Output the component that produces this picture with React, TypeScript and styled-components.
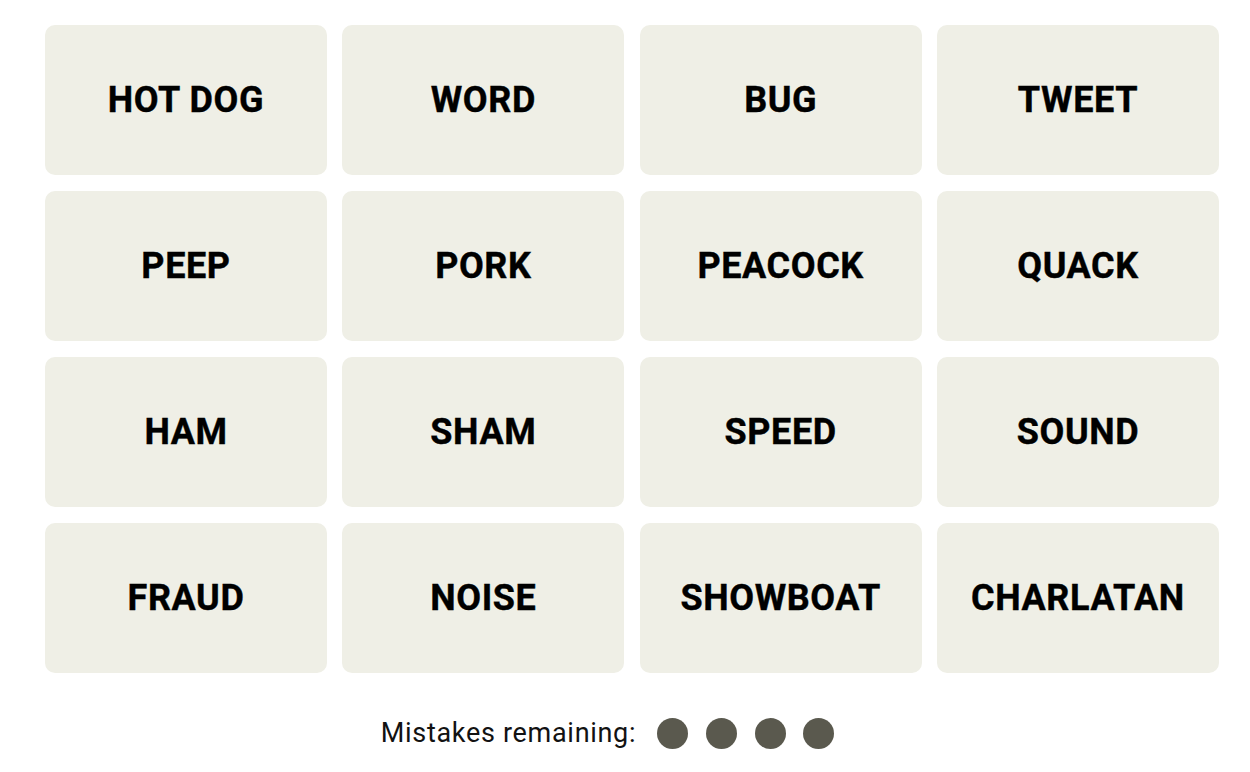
import React from "react";
import styled, { createGlobalStyle } from "styled-components";

const GlobalStyle = createGlobalStyle`
  html, body {
    margin: 0;
    padding: 0;
    background: #ffffff;
  }
  body {
    font-family: Roboto, "Liberation Sans", Arial, sans-serif;
  }
`;

const Page = styled.main`
  width: 1250px;
  height: 772px;
  box-sizing: border-box;
  padding: 25px 31px 0 45px;
  display: flex;
  flex-direction: column;
`;

const Board = styled.div`
  width: 1174px;
  display: grid;
  grid-template-columns: repeat(4, 282px);
  grid-auto-rows: 150px;
  column-gap: 15.33px;
  row-gap: 16px;
`;

const Tile = styled.button`
  border: none;
  margin: 0;
  padding: 0;
  border-radius: 10px;
  background: #efefe6;
  color: #000000;
  font-family: Roboto, "Liberation Sans", Arial, sans-serif;
  font-weight: 700;
  font-size: 36px;
  letter-spacing: 0.6px;
  text-transform: uppercase;
  -webkit-text-stroke: 0.4px #000000;
  display: flex;
  align-items: center;
  justify-content: center;
  cursor: pointer;
`;

const Footer = styled.div`
  margin-top: 44px;
  margin-left: -45px;
  width: 1250px;
  box-sizing: border-box;
  padding-right: 35px;
  display: flex;
  align-items: center;
  justify-content: center;
  gap: 21px;
`;

const Label = styled.span`
  font-family: Roboto, "Liberation Sans", Arial, sans-serif;
  font-size: 27px;
  font-weight: 400;
  letter-spacing: 0.7px;
  color: #121212;
`;

const Dots = styled.div`
  display: flex;
  align-items: center;
  gap: 17.7px;
`;

const Dot = styled.span`
  width: 31px;
  height: 31px;
  border-radius: 50%;
  background: #5a594e;
  display: block;
`;

const words = [
  "HOT DOG", "WORD", "BUG", "TWEET",
  "PEEP", "PORK", "PEACOCK", "QUACK",
  "HAM", "SHAM", "SPEED", "SOUND",
  "FRAUD", "NOISE", "SHOWBOAT", "CHARLATAN",
];

export default function App() {
  return (
    <>
      <GlobalStyle />
      <Page>
        <Board>
          {words.map((w) => (
            <Tile key={w}>{w}</Tile>
          ))}
        </Board>
        <Footer>
          <Label>Mistakes remaining:</Label>
          <Dots>
            <Dot />
            <Dot />
            <Dot />
            <Dot />
          </Dots>
        </Footer>
      </Page>
    </>
  );
}
